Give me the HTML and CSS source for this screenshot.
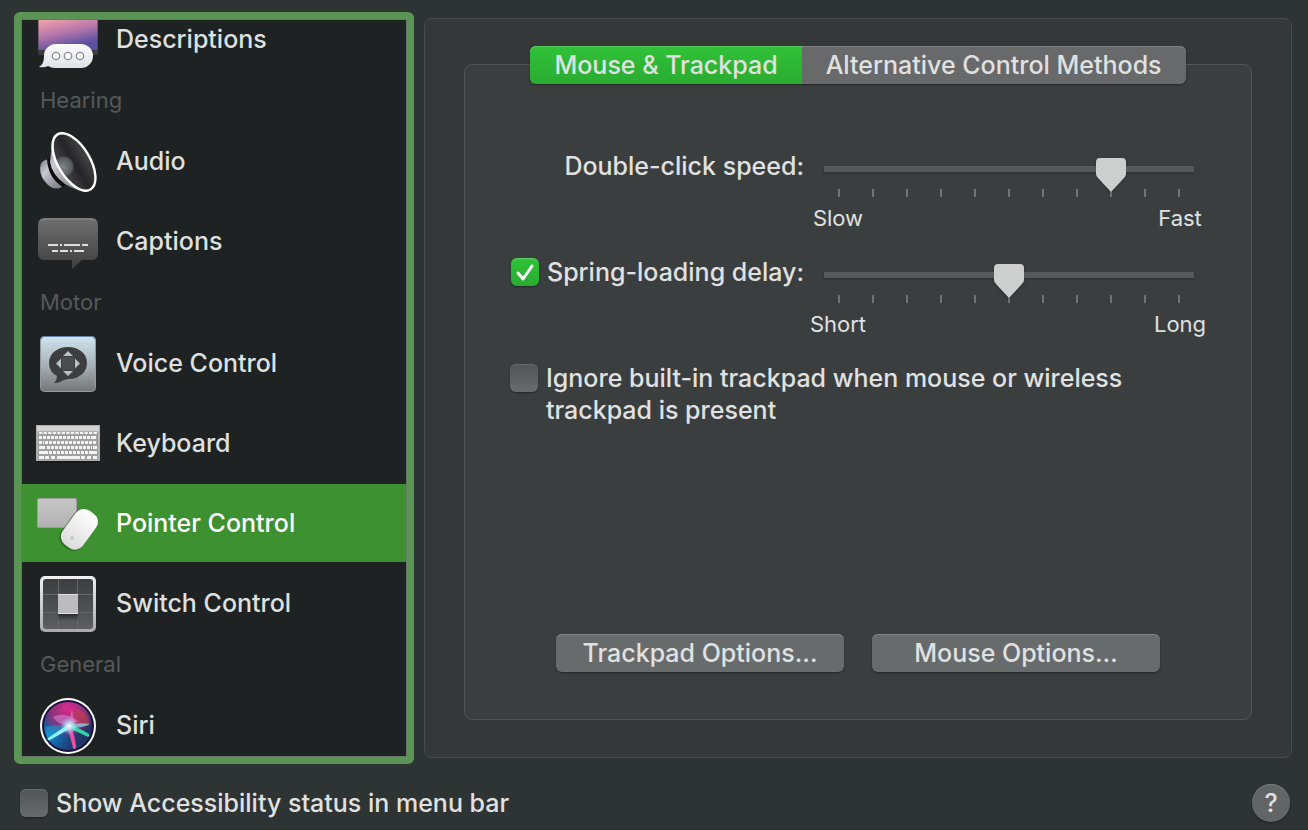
FILE: index.html
```html
<!DOCTYPE html>
<html lang="en">
<head>
    <meta charset="UTF-8">
    <meta name="viewport" content="width=device-width, initial-scale=1.0">
    <title>Accessibility</title>
    <link rel="stylesheet" href="styles.css">
</head>
<body>
    <main class="content">
        <nav class="sidebar" aria-label="Accessibility features">
            <div class="sidebar-list">
                <a href="#descriptions" class="item">
                    <svg class="icon" viewBox="0 0 64 64" aria-hidden="true">
                        <defs>
                            <linearGradient id="sky" x1="0" y1="0" x2="0.3" y2="1">
                                <stop offset="0.3" stop-color="#f0a0a8"/>
                                <stop offset="0.65" stop-color="#b878ac"/>
                                <stop offset="1" stop-color="#5a50a0"/>
                            </linearGradient>
                            <linearGradient id="bubble" x1="0" y1="0" x2="0" y2="1">
                                <stop offset="0" stop-color="#fafbfc"/>
                                <stop offset="1" stop-color="#dfe3e8"/>
                            </linearGradient>
                        </defs>
                        <rect x="2" y="0" width="60" height="48" fill="#3b3b3d"/>
                        <rect x="2.500" y="0" width="59" height="43" fill="url(#sky)"/>
                        <path d="M20 37H45A12 12 0 0 1 45 61H19Q15 61 12 59Q8 61 3 60Q8 57 8 50A12 12 0 0 1 20 37Z" fill="url(#bubble)"/>
                        <g fill="#fff" stroke="#8a8c90" stroke-width="1.3">
                            <circle cx="20" cy="49" r="3.7"/>
                            <circle cx="32" cy="49" r="3.7"/>
                            <circle cx="44" cy="49" r="3.7"/>
                        </g>
                    </svg>
                    <span>Descriptions</span>
                </a>

                <h2 class="group-title">Hearing</h2>
                <a href="#audio" class="item">
                    <svg class="icon" viewBox="0 0 64 64" aria-hidden="true">
                        <defs>
                            <linearGradient id="cone" x1="0" y1="0" x2="0.9" y2="1">
                                <stop offset="0" stop-color="#77787f"/>
                                <stop offset="0.35" stop-color="#c9c9d1"/>
                                <stop offset="0.6" stop-color="#a5a6ad"/>
                                <stop offset="1" stop-color="#77787e"/>
                            </linearGradient>
                            <radialGradient id="dome">
                                <stop offset="0" stop-color="#7f8788"/>
                                <stop offset="0.8" stop-color="#565d60"/>
                                <stop offset="1" stop-color="#3a3d40"/>
                            </radialGradient>
                            <linearGradient id="inside" x1="0" y1="0" x2="0" y2="1">
                                <stop offset="0" stop-color="#434345"/>
                                <stop offset="0.5" stop-color="#252527"/>
                                <stop offset="1" stop-color="#434347"/>
                            </linearGradient>
                            <clipPath id="rim"><ellipse cx="38" cy="33" rx="33" ry="16" transform="rotate(59 38 33)"/></clipPath>
                        </defs>
                        <path d="M13 30Q4 31 4 39Q4 48 11 55Q17 61 24 59L28 56Z" fill="url(#cone)"/>
                        <path d="M11 30Q12 49 27 58L32 54L16 28Z" fill="#0c0c0e"/>
                        <path d="M25 3Q17 3 16 14Q15 25 14 33Q16 46 29 55Q40 62 53 63L40 34Z" fill="url(#cone)"/>
                        <ellipse cx="38" cy="33" rx="32" ry="15" transform="rotate(59 38 33)" fill="url(#inside)"/>
                        <g clip-path="url(#rim)"><circle cx="27" cy="38" r="11" fill="url(#dome)"/></g>
                        <ellipse cx="38" cy="33" rx="32" ry="16" transform="rotate(59 38 33)" fill="none" stroke="#fff" stroke-width="2.4"/>
                    </svg>
                    <span>Audio</span>
                </a>
                <a href="#captions" class="item">
                    <svg class="icon" viewBox="0 0 64 64" aria-hidden="true">
                        <defs>
                            <linearGradient id="caption" x1="0" y1="0" x2="0" y2="1">
                                <stop offset="0" stop-color="#6f6f6f"/>
                                <stop offset="1" stop-color="#3e3e3e"/>
                            </linearGradient>
                        </defs>
                        <path d="M9 9H55Q62 9 62 16V44Q62 51 55 51H46L36 60V51H9Q2 51 2 44V16Q2 9 9 9Z" fill="url(#caption)"/>
                        <path d="M4 12Q6 10 9 10H55Q58 10 60 12" fill="none" stroke="#8b8b8b"/>
                        <path d="M12 36H22M24 36H26M28 36H44M46 36H52M16 42H22M24 42H32M34 42H36M38 42H48" stroke="#dedede" stroke-width="2"/>
                    </svg>
                    <span>Captions</span>
                </a>

                <h2 class="group-title">Motor</h2>
                <a href="#voice-control" class="item">
                    <svg class="icon" viewBox="0 0 64 64" aria-hidden="true">
                        <defs>
                            <linearGradient id="voice" x1="0" y1="0" x2="0" y2="1">
                                <stop offset="0" stop-color="#cfe4ee"/>
                                <stop offset="0.5" stop-color="#a9b4ba"/>
                                <stop offset="1" stop-color="#757575"/>
                            </linearGradient>
                        </defs>
                        <rect x="4.500" y="5.500" width="55" height="55" rx="4" fill="url(#voice)" stroke="#929ba3"/>
                        <path d="M5 8Q5 5.500 8 5.500H56Q59 5.500 59 8" fill="none" stroke="#6585ad"/>
                        <path d="M32 16C42 16 51 22 51 32C51 42 42 48 33 48Q29 48 26 50Q23 52 18 52Q21 49 21 45Q13 41 13 32C13 22 22 16 32 16Z" fill="#3c3d3f"/>
                        <path d="M32 20L37 25H27ZM32 45L37 40H27ZM20 32.500L25 27.500V37.500ZM44 32.500L39 27.500V37.500Z" fill="#b5c1c8"/>
                        <rect x="26" y="26" width="12" height="13" fill="#4b4c4e"/>
                    </svg>
                    <span>Voice Control</span>
                </a>
                <a href="#keyboard" class="item">
                    <svg class="icon" viewBox="0 0 64 64" aria-hidden="true">
                        <rect x="0" y="16" width="64" height="36" fill="#0f1212" opacity="0.6"/>
                        <rect x="0" y="14" width="64" height="36" fill="#b0b0b0"/>
                        <rect x="1" y="15" width="62" height="5" fill="#d2d2d2"/>
                        <rect x="2" y="21" width="60" height="28" fill="#a0a0a0"/>
                        <g stroke="#f4f4f4" fill="none">
                            <path d="M3 22H61" stroke-width="2" stroke-dasharray="3.300 1.250"/>
                            <path d="M3 26.500H57M57 26.500H61" stroke-width="3" stroke-dasharray="3 1"/>
                            <path d="M3 31.500H8M9 31.500H56M57 31.500H61" stroke-width="3" stroke-dasharray="3 1"/>
                            <path d="M3 36.500H9M57 36.500H61" stroke-width="3"/>
                            <path d="M11 36.500H56" stroke-width="3" stroke-dasharray="3 1"/>
                            <path d="M3 41.500H12M53 41.500H61" stroke-width="3"/>
                            <path d="M13 41.500H52" stroke-width="3" stroke-dasharray="3 1"/>
                            <path d="M3 46.500H8M9 46.500H13M15 46.500H19M21 46.500H44M45 46.500H49M51 46.500H55M57 46.500H61" stroke-width="3"/>
                        </g>
                    </svg>
                    <span>Keyboard</span>
                </a>
                <a href="#pointer-control" class="item selected" aria-current="page">
                    <svg class="icon" viewBox="0 0 64 64" aria-hidden="true">
                        <defs>
                            <linearGradient id="pad" x1="0" y1="0" x2="0" y2="1">
                                <stop offset="0" stop-color="#c6c6c6"/>
                                <stop offset="1" stop-color="#b1b1b1"/>
                            </linearGradient>
                            <linearGradient id="mouse" x1="0" y1="0" x2="0" y2="1">
                                <stop offset="0" stop-color="#ffffff"/>
                                <stop offset="1" stop-color="#dcdcdc"/>
                            </linearGradient>
                        </defs>
                        <rect x="1.500" y="7.500" width="39" height="29" rx="1.500" fill="url(#pad)" stroke="#9c9c9c"/>
                        <rect x="30" y="17" width="26" height="44" rx="11" transform="rotate(36 43 38)" fill="#1e5218" opacity="0.5"/>
                        <rect x="31" y="17" width="25" height="42" rx="10" transform="rotate(36 43 38)" fill="url(#mouse)"/>
                        <circle cx="36" cy="47" r="2" fill="#c9c9c9"/>
                    </svg>
                    <span>Pointer Control</span>
                </a>
                <a href="#switch-control" class="item">
                    <svg class="icon" viewBox="0 0 64 64" aria-hidden="true">
                        <defs>
                            <linearGradient id="plate" x1="0" y1="0" x2="0" y2="1">
                                <stop offset="0" stop-color="#3c3d3f"/>
                                <stop offset="1" stop-color="#5d5e61"/>
                            </linearGradient>
                            <linearGradient id="frame" x1="0" y1="0" x2="0" y2="1">
                                <stop offset="0" stop-color="#f2f2f2"/>
                                <stop offset="1" stop-color="#a9aaac"/>
                            </linearGradient>
                            <linearGradient id="shade" x1="0" y1="0" x2="0" y2="1">
                                <stop offset="0.6" stop-color="#1c1c1e"/>
                                <stop offset="1" stop-color="#1c1c1e" stop-opacity="0"/>
                            </linearGradient>
                        </defs>
                        <rect x="4" y="5" width="56" height="56" rx="5" fill="url(#frame)"/>
                        <rect x="7" y="8" width="50" height="50" rx="3" fill="url(#plate)"/>
                        <path d="M22.500 8V58M41.500 8V58M7 23.500H57M7 41.500H57" stroke="#67686b"/>
                        <rect x="22" y="25" width="20" height="25" fill="url(#shade)"/>
                        <rect x="22" y="23" width="20" height="20" rx="1" fill="#bcbcbc"/>
                        <path d="M22 23.500H42M22 42.500H42" stroke="#dedede"/>
                    </svg>
                    <span>Switch Control</span>
                </a>

                <h2 class="group-title">General</h2>
                <a href="#siri" class="item">
                    <svg class="icon" viewBox="0 0 64 64" aria-hidden="true">
                        <defs>
                            <radialGradient id="orbPink" cx="0.5" cy="0.15" r="0.6">
                                <stop offset="0" stop-color="#e02a8c"/>
                                <stop offset="0.6" stop-color="#a5307e" stop-opacity="0.8"/>
                                <stop offset="1" stop-color="#a5307e" stop-opacity="0"/>
                            </radialGradient>
                            <radialGradient id="orbBlue" cx="0.15" cy="0.7" r="0.6">
                                <stop offset="0" stop-color="#0d8ad0"/>
                                <stop offset="1" stop-color="#1b4f9c" stop-opacity="0"/>
                            </radialGradient>
                            <radialGradient id="glow">
                                <stop offset="0" stop-color="#ffffff"/>
                                <stop offset="0.4" stop-color="#b8f4ff" stop-opacity="0.7"/>
                                <stop offset="1" stop-color="#6fd0ff" stop-opacity="0"/>
                            </radialGradient>
                        </defs>
                        <circle cx="32" cy="33" r="28" fill="#fff"/>
                        <circle cx="32" cy="33" r="26" fill="#17123f"/>
                        <circle cx="32" cy="33" r="24" fill="#203566"/>
                        <circle cx="32" cy="33" r="24" fill="url(#orbBlue)"/>
                        <circle cx="32" cy="33" r="24" fill="url(#orbPink)"/>
                        <path d="M40 16Q52 18 54 31Q44 34 32 33Z" fill="#c8404e" opacity="0.6"/>
                        <path d="M17 24Q28 18 42 28L32 33Q22 32 17 24Z" fill="#d78ad6" opacity="0.55"/>
                        <path d="M32 33L36 16L39 34Z" fill="#f07ac6" opacity="0.6"/>
                        <path d="M9 34Q22 31 32 33Q24 40 11 47Z" fill="#15a4d4" opacity="0.5"/>
                        <path d="M33 31L12 45Q11 48 14 47L35 35Z" fill="#8cf4ff"/>
                        <path d="M33 31Q45 36 53 41Q54 45 50 43Q40 38 31 35Z" fill="#2fd8a0"/>
                        <path d="M32 33Q40 29 54 31Q48 35 34 35Z" fill="#8ec9dd" opacity="0.8"/>
                        <path d="M31 33Q35 46 37 55Q40 58 40 53Q39 43 35 33Z" fill="#ee4fa4"/>
                        <circle cx="33" cy="33" r="9" fill="url(#glow)"/>
                    </svg>
                    <span>Siri</span>
                </a>
            </div>
        </nav>

        <section class="panel">
            <div class="group">
                <div class="tabs" role="tablist">
                    <button type="button" class="tab active" role="tab" aria-selected="true">Mouse &amp; Trackpad</button>
                    <button type="button" class="tab" role="tab" aria-selected="false">Alternative Control Methods</button>
                </div>

                <form class="settings">
                    <div class="setting">
                        <label class="setting-label" for="clickSpeed">Double-click speed:</label>
                        <div class="slider">
                            <input type="range" id="clickSpeed" min="0" max="10" value="8">
                            <div class="ticks"><i></i><i></i><i></i><i></i><i></i><i></i><i></i><i></i><i></i><i></i><i></i></div>
                            <div class="ends"><span>Slow</span><span>Fast</span></div>
                        </div>
                    </div>
                    <div class="setting">
                        <label class="check setting-label">
                            <input type="checkbox" id="springLoading" checked>
                            <span>Spring-loading delay:</span>
                        </label>
                        <div class="slider">
                            <input type="range" id="springDelay" min="0" max="10" value="5" aria-label="Spring-loading delay">
                            <div class="ticks"><i></i><i></i><i></i><i></i><i></i><i></i><i></i><i></i><i></i><i></i><i></i></div>
                            <div class="ends"><span>Short</span><span>Long</span></div>
                        </div>
                    </div>
                    <label class="check">
                        <input type="checkbox" id="ignoreTrackpad">
                        <span>Ignore built-in trackpad when mouse or wireless trackpad is present</span>
                    </label>
                </form>

                <div class="actions">
                    <button type="button" class="btn">Trackpad Options…</button>
                    <button type="button" class="btn">Mouse Options…</button>
                </div>
            </div>
        </section>
    </main>

    <footer class="footer">
        <label class="check">
            <input type="checkbox" id="showStatus">
            <span>Show Accessibility status in menu bar</span>
        </label>
        <button type="button" class="help" aria-label="Help">?</button>
    </footer>
</body>
</html>
```
FILE: styles.css
```css
* {
    box-sizing: border-box;
}
body {
    display: flex;
    flex-direction: column;
    height: 100vh;
    margin: 0;
    border-bottom: 1px solid #252929;
    background-color: #2e3333;
    color: #e0e1e1;
    font-family: Inter, "Liberation Sans", sans-serif;
    font-size: 25px;
    font-weight: 500;
    line-height: 32px;
}
button, input {
    margin: 0;
    font: inherit;
    color: inherit;
}
.content {
    flex: 1;
    display: grid;
    grid-template-columns: 400px 1fr;
    grid-template-rows: minmax(0, 1fr);
    gap: 10px;
    min-height: 0;
    padding: 12px 16px 0 14px;
}

/* Sidebar */
.sidebar {
    border: 7px solid #5b9556;
    border-radius: 6px;
    background-color: #1e2222;
}
.sidebar-list {
    display: flex;
    flex-direction: column;
    gap: 2px;
    height: 100%;
    border: 1px solid #687768;
    overflow: hidden;
}
.item {
    flex: none;
    display: flex;
    align-items: center;
    gap: 16px;
    height: 78px;
    padding: 0 14px;
    color: #dfe0e0;
    text-decoration: none;
}
/* the list is scrolled down a little */
.item:first-child {
    margin-top: -20px;
}
.item.selected {
    background-color: #3d9131;
    color: #fff;
}
.icon {
    flex: none;
    width: 64px;
    height: 64px;
}
.group-title {
    flex: none;
    height: 40px;
    margin: 0;
    padding: 0 18px;
    color: #56595a;
    font-size: 22px;
    font-weight: 400;
    line-height: 40px;
}

/* Right panel */
.panel {
    display: flex;
    margin: 6px 0;
    padding: 45px 39px 37px;
    border: 1px solid #484c4d;
    border-radius: 8px;
    background-color: #353839;
}
.group {
    flex: 1;
    display: flex;
    flex-direction: column;
    padding: 0 57px 47px 45px;
    border: 1px solid #505354;
    border-radius: 8px;
    background-color: #3b3e3f;
}
.tabs {
    display: flex;
    align-self: center;
    margin: -19px 0 66px 12px;
    border-radius: 6px;
    box-shadow: 0 1px 2px rgba(0, 0, 0, 0.4);
}
.tab {
    height: 38px;
    padding: 0 24px;
    border: none;
    border-radius: 0 6px 6px 0;
    background-color: #67696a;
    box-shadow: inset 0 1px #808283;
    white-space: nowrap;
}
.tab.active {
    border-radius: 6px 0 0 6px;
    background: linear-gradient(#30c238, #2aab31);
    box-shadow: inset 0 1px #5ad05e;
}
.settings {
    display: flex;
    flex-direction: column;
    gap: 24px;
}
.setting {
    display: grid;
    grid-template-columns: 294px 1fr;
    gap: 20px;
}
.setting-label {
    justify-self: end;
    align-self: start;
    white-space: nowrap;
}

.slider {
    display: flex;
    flex-direction: column;
    padding-top: 8px;
}
.slider input {
    -webkit-appearance: none;
    appearance: none;
    position: relative;
    width: 100%;
    height: 34px;
    background: none;
    filter: drop-shadow(0 1px 1px rgba(0, 0, 0, 0.3));
}
.slider input::-webkit-slider-runnable-track {
    height: 34px;
    border-radius: 3px;
    background: linear-gradient(#56595a, #56595a) 0 8px / 100% 6px no-repeat;
}
.slider input::-webkit-slider-thumb {
    -webkit-appearance: none;
    width: 30px;
    height: 34px;
    background-color: #cdcfce;
    clip-path: path("M4 0H26Q30 0 30 4V16Q30 18 28 20L15 34L2 20Q0 18 0 16V4Q0 0 4 0Z");
}
.ticks {
    display: flex;
    justify-content: space-between;
    margin-top: -3px;
    padding: 0 14px;
}
.ticks i {
    width: 2px;
    height: 8px;
    background-color: #707374;
}
.ends {
    display: flex;
    justify-content: space-between;
    margin: 7px -15px 0;
    font-size: 22px;
    font-weight: 400;
    line-height: 28px;
}
.ends span {
    width: 58px;
    text-align: center;
    white-space: nowrap;
}

.check {
    display: flex;
    align-items: flex-start;
    gap: 8px;
}
.check input {
    -webkit-appearance: none;
    appearance: none;
    flex: none;
    width: 28px;
    height: 28px;
    margin-top: 2px;
    border-radius: 6px;
    background: linear-gradient(#525556, #686b6c);
    box-shadow: inset 0 1px #6a6d6e, 0 1px 2px rgba(0, 0, 0, 0.4);
}
.check input:checked {
    background: url("data:image/svg+xml,%3Csvg xmlns='http://www.w3.org/2000/svg' viewBox='0 0 28 28'%3E%3Cpath d='M7 15l5 6L21 8' fill='none' stroke='white' stroke-width='3' stroke-linecap='round' stroke-linejoin='round'/%3E%3C/svg%3E"), linear-gradient(#30c238, #2aab31);
    box-shadow: inset 0 1px #5ad05e, 0 1px 2px rgba(0, 0, 0, 0.4);
}

.actions {
    display: flex;
    justify-content: center;
    gap: 28px;
    margin-top: auto;
    padding-left: 12px;
}
.btn {
    width: 288px;
    height: 38px;
    padding: 0;
    border: none;
    border-radius: 6px;
    background-color: #686b6c;
    box-shadow: inset 0 1px #838586, 0 1px 2px rgba(0, 0, 0, 0.4);
}

/* Footer */
.footer {
    display: flex;
    justify-content: space-between;
    align-items: center;
    height: 65px;
    padding: 12px 18px 0 20px;
}
.help {
    width: 38px;
    height: 38px;
    padding: 0;
    border: none;
    border-radius: 50%;
    background-color: #626566;
    box-shadow: inset 0 1px #777a7b, 0 1px 2px rgba(0, 0, 0, 0.4);
}
```
